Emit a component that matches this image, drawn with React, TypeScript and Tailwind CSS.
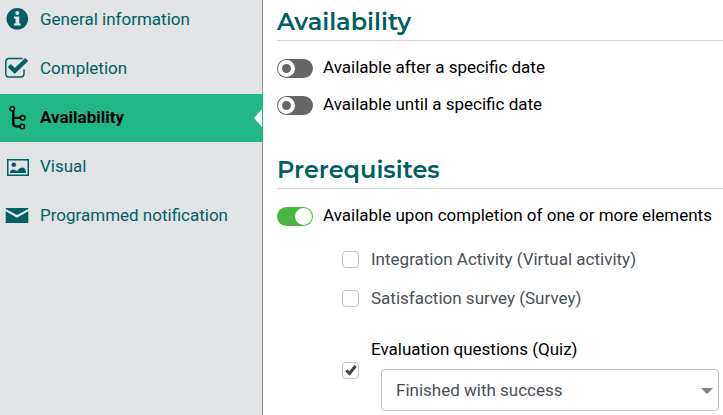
import type { ReactNode } from "react";
import { clsx } from "clsx";

const InfoIcon = () => (
  <svg viewBox="0 0 24 24" className="size-6" aria-hidden="true">
    <circle cx="12.300" cy="10.800" r="10.800" fill="currentColor" />
    <circle cx="12.300" cy="5" r="2" fill="#e1e3e5" />
    <path d="M9 8.500h5.300v7h1.500v2H9v-2h1.500v-5H9z" fill="#e1e3e5" />
  </svg>
);

const CheckIcon = () => (
  <svg viewBox="0 0 24 24" className="size-6" aria-hidden="true" fill="none" stroke="currentColor">
    <path d="M17.500 1.500H4Q0.750 1.500 0.750 5V16.500Q0.750 20 4 20H15.500Q19 20 19 16.500V12.500" strokeWidth="1.5" />
    <path d="M4.300 8.500L9.700 14L21.700 2.500" strokeWidth="4.200" />
  </svg>
);

const BranchIcon = () => (
  <svg viewBox="0 0 24 24" className="size-6" aria-hidden="true" fill="none" stroke="currentColor">
    <path d="M8.300 5V17Q8.300 20.300 11.500 20.300H15.200M8.300 11.800H15.200" strokeWidth="2.300" />
    <g strokeWidth="1.400">
      <circle cx="7.200" cy="2.800" r="2.300" />
      <circle cx="17.700" cy="11.800" r="2.300" />
      <circle cx="17.300" cy="20.500" r="2.300" />
    </g>
  </svg>
);

const PictureIcon = () => (
  <svg viewBox="0 0 24 24" className="size-6" aria-hidden="true">
    <rect x="2.750" y="4.750" width="20.500" height="15.500" fill="none" stroke="currentColor" strokeWidth="1.500" />
    <circle cx="8.800" cy="9.700" r="2.300" fill="currentColor" />
    <path d="M5 18V16.500Q7.500 13.500 10.500 15.200L12.500 16Q13.500 13 17 12.500Q20.500 12.500 21 16.500V18z" fill="currentColor" />
  </svg>
);

const MailIcon = () => (
  <svg viewBox="0 0 24 24" className="size-6" aria-hidden="true" fill="currentColor">
    <path d="M0.700 4H23.300V5L12 11L0.700 5z" />
    <path d="M0.700 7.200L12 13.700L23.300 7.200V19H0.700z" />
  </svg>
);

const items = [
  { label: "General information", icon: <InfoIcon /> },
  { label: "Completion", icon: <CheckIcon /> },
  { label: "Availability", icon: <BranchIcon />, active: true },
  { label: "Visual", icon: <PictureIcon /> },
  { label: "Programmed notification", icon: <MailIcon /> },
];

function Sidebar() {
  return (
    <aside className="w-[263px] shrink-0 border-r border-[#929292] bg-[#e1e3e5]">
      <nav className="-mt-1 flex flex-col gap-px">
        {items.map(({ label, icon, active }) => (
          <a
            key={label}
            href="#"
            aria-current={active ? "page" : undefined}
            className={clsx(
              "relative flex h-12 items-center gap-[11px] pl-[5px]",
              active ? "-mr-px bg-[#22b787] font-bold text-black" : "text-[#005f63]"
            )}
          >
            {icon}
            <span className="pb-0.5">{label}</span>
            {active && (
              <svg viewBox="0 0 8 18" className="absolute right-px h-[18px] w-2" aria-hidden="true">
                <path d="M8 0V18L0 9z" fill="#fff" />
              </svg>
            )}
          </a>
        ))}
      </nav>
    </aside>
  );
}

function Section({ title, children }: { title: string; children: ReactNode }) {
  return (
    <section>
      <h2 className="border-b border-[#d6d6d6] pt-1 font-[Montserrat,Inter,sans-serif] text-2xl leading-9 font-semibold text-[#005f63]">
        {title}
      </h2>
      {children}
    </section>
  );
}

function Toggle({ label, on }: { label: string; on?: boolean }) {
  return (
    <label className="flex items-center gap-2.5 leading-6">
      <input
        type="checkbox"
        role="switch"
        defaultChecked={on}
        className="mt-0.5 flex h-[19px] w-9 shrink-0 appearance-none items-center rounded-full bg-[#666] px-px before:size-[17px] before:rounded-full before:border-4 before:border-white checked:justify-end checked:bg-[#4bb543] checked:before:bg-white"
      />
      {label}
    </label>
  );
}

function CheckBox({ id, checked }: { id: string; checked?: boolean }) {
  return (
    <span className="grid shrink-0 place-items-center">
      <input
        id={id}
        type="checkbox"
        defaultChecked={checked}
        className="peer col-start-1 row-start-1 size-[17px] appearance-none rounded-sm border border-[#c4c4c4] bg-white"
      />
      <svg
        viewBox="0 0 12 12"
        className="pointer-events-none invisible col-start-1 row-start-1 size-3 peer-checked:visible"
        aria-hidden="true"
      >
        <path d="M1.300 6.300L4.500 9.500L10.500 2" fill="none" stroke="#444" strokeWidth="3" />
      </svg>
    </span>
  );
}

export default function App() {
  return (
    <div className="flex min-h-screen bg-white font-[Roboto,sans-serif] text-[17px] leading-6 text-black">
      <Sidebar />
      <main className="flex min-w-0 flex-1 flex-col gap-8 pl-3.5">
        <Section title="Availability">
          <div className="flex flex-col gap-[13px] pt-3.5">
            <Toggle label="Available after a specific date" />
            <Toggle label="Available until a specific date" />
          </div>
        </Section>

        <Section title="Prerequisites">
          <div className="pt-3.5">
            <Toggle label="Available upon completion of one or more elements" on />
          </div>
          <div className="flex flex-col gap-[15px] pt-5 pr-1 pl-[65px] text-[#495057]">
            <div className="flex items-center gap-3">
              <CheckBox id="integration" />
              <label htmlFor="integration">Integration Activity (Virtual activity)</label>
            </div>
            <div className="flex items-center gap-3">
              <CheckBox id="survey" />
              <label htmlFor="survey">Satisfaction survey (Survey)</label>
            </div>
            <div className="flex items-center gap-3 pt-1">
              <CheckBox id="quiz" checked />
              <div className="flex-1 pt-2">
                <label htmlFor="quiz" className="text-black">
                  Evaluation questions (Quiz)
                </label>
                <div className="relative mt-2 ml-2.5">
                  <select
                    aria-label="Quiz condition"
                    className="block h-[42px] w-full appearance-none rounded-sm border border-[#c4c4c4] bg-white px-3.5"
                  >
                    <option>Finished with success</option>
                  </select>
                  <svg
                    viewBox="0 0 12 6"
                    className="pointer-events-none absolute top-[19px] right-1.5 h-1.5 w-3"
                    aria-hidden="true"
                  >
                    <path d="M0 0H12L6 6z" fill="#808080" />
                  </svg>
                </div>
              </div>
            </div>
          </div>
        </Section>
      </main>
    </div>
  );
}
